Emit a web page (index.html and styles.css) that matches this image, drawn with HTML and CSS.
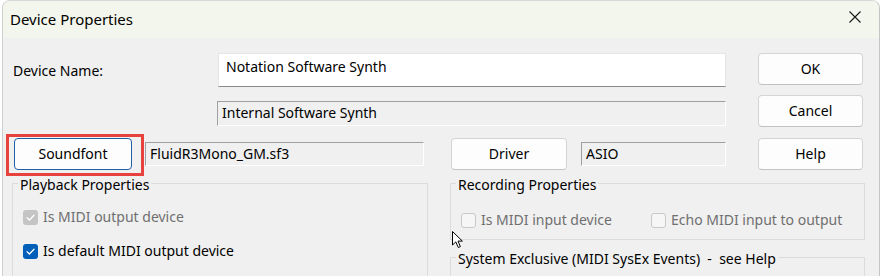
FILE: index.html
```html
<!DOCTYPE html>
<html>
<head>
<meta charset="utf-8">
<title>Device Properties</title>
<link rel="stylesheet" href="styles.css">
</head>
<body>
<div class="window">
  <div class="titlebar">
    <span class="title">Device Properties</span>
    <svg class="close" width="12" height="12" viewBox="0 0 12 12"><path d="M0.5 0.5 L11.5 11.5 M11.5 0.5 L0.5 11.5" stroke="#1a1a1a" stroke-width="1.1" fill="none"/></svg>
  </div>
  <div class="content">
    <div class="row r1">
      <div class="label">Device Name:</div>
      <div class="edit name">Notation Software Synth</div>
      <div class="btn ok">OK</div>
    </div>
    <div class="row r2">
      <div class="spacer"></div>
      <div class="field internal">Internal Software Synth</div>
      <div class="btn cancel">Cancel</div>
    </div>
    <div class="row r3">
      <div class="btn soundfont focus">Soundfont<span class="highlight"></span></div>
      <div class="field sf">FluidR3Mono_GM.sf3</div>
      <div class="btn driver">Driver</div>
      <div class="field asio">ASIO</div>
      <div class="btn help">Help</div>
    </div>
    <div class="groups">
      <fieldset class="group playback">
        <legend>Playback Properties</legend>
        <div class="check disabled"><span class="box checked-dis"><svg width="15" height="15" viewBox="0 0 15 15"><path d="M4 7.6 L6.4 10 L11 5.2" stroke="#fff" stroke-width="1.3" fill="none" stroke-linecap="round" stroke-linejoin="round"/></svg></span>Is MIDI output device</div>
        <div class="check second"><span class="box checked"><svg width="15" height="15" viewBox="0 0 15 15"><path d="M4 7.6 L6.4 10 L11 5.2" stroke="#fff" stroke-width="1.3" fill="none" stroke-linecap="round" stroke-linejoin="round"/></svg></span>Is default MIDI output device</div>
      </fieldset>
      <div class="rightcol">
        <fieldset class="group recording">
          <legend>Recording Properties</legend>
          <div class="checkrow">
            <div class="check disabled input"><span class="box empty"></span>Is MIDI input device</div>
            <div class="check disabled"><span class="box empty"></span>Echo MIDI input to output</div>
          </div>
        </fieldset>
        <fieldset class="group sysex">
          <legend>System Exclusive (MIDI SysEx Events)&nbsp; -&nbsp; see Help</legend>
        </fieldset>
      </div>
    </div>
    <svg class="cursor" width="12" height="18" viewBox="0 0 12 18"><path d="M0.5 0.5 L0.5 14 L3.8 10.9 L6.3 16.5 L8.4 15.6 L6 10.1 L10.4 10.1 Z" fill="#fff" stroke="#000" stroke-width="1" stroke-linejoin="miter"/></svg>
  </div>
</div>
</body>
</html>
```

FILE: styles.css
```css
html, body {
  margin: 0;
  padding: 0;
  background: #ffffff;
  width: 886px;
  height: 276px;
  overflow: hidden;
  font-family: "Noto Sans", "Liberation Sans", sans-serif;
  font-size: 14px;
  color: #000;
}

.window {
  margin-left: 2px;
  width: 878px;
  height: 276px;
  border-left: 1px solid #cfcfcf;
  border-right: 1px solid #c4c4c4;
  border-top: 1px solid #d8d8d8;
  border-top-right-radius: 8px;
  border-top-left-radius: 8px;
  background: #f0f0f0;
  overflow: hidden;
  box-sizing: border-box;
}

.titlebar {
  height: 37px;
  background: #f3f6ec;
  display: flex;
  align-items: center;
  justify-content: space-between;
  padding: 0 0 0 7px;
}

.title {
  font-size: 15px;
  margin-top: -2px;
}

.close {
  margin-right: 18px;
  margin-top: -6px;
}

.content {
  position: relative;
  height: 238px;
}

.row {
  display: flex;
  align-items: flex-start;
}

.r1 {
  padding-top: 15px;
  height: 34px;
}

.label {
  width: 205px;
  padding-left: 10px;
  line-height: 20px;
  margin-top: 8px;
}

.edit {
  width: 508px;
  height: 34px;
  box-sizing: border-box;
  background: #fff;
  border: 1px solid #e6e6e6;
  border-bottom: 1px solid #8a8a8a;
  padding: 3px 0 0 7px;
  line-height: 20px;
}

.btn {
  box-sizing: border-box;
  height: 32px;
  background: #fdfdfd;
  border: 1px solid #d4d4d4;
  border-bottom-color: #c2c2c2;
  border-radius: 4px;
  display: flex;
  align-items: center;
  justify-content: center;
  line-height: 20px;
}

.ok, .cancel, .help {
  width: 105px;
  margin-left: 32px;
}

.r2 {
  margin-top: 8px;
  height: 32px;
}

.spacer {
  width: 214px;
}

.field {
  box-sizing: border-box;
  height: 25px;
  border-top: 1px solid #a0a0a0;
  border-left: 1px solid #a0a0a0;
  border-right: 1px solid #ffffff;
  border-bottom: 1px solid #ffffff;
  background: #f0f0f0;
  padding-left: 4px;
  line-height: 22px;
}

.internal {
  width: 509px;
  margin-top: 6px;
}

.r3 {
  margin-top: 11px;
  height: 32px;
  padding-left: 11px;
}

.soundfont {
  width: 118px;
  position: relative;
}

.focus {
  border: 1px solid #1f5fa8;
}

.highlight {
  position: absolute;
  left: -9px;
  top: -5px;
  width: 138px;
  height: 42px;
  border: 3px solid #e8423f;
  box-sizing: border-box;
}

.sf {
  width: 279px;
  margin-left: 13px;
  margin-top: 4px;
  height: 24px;
}

.driver {
  width: 116px;
  margin-left: 27px;
}

.asio {
  width: 145px;
  margin-left: 14px;
  margin-top: 4px;
  height: 24px;
}

.groups {
  display: flex;
  padding-left: 9px;
  margin-top: 1px;
  gap: 22px;
}

fieldset.group {
  margin: 0;
  padding: 0 10px;
  border: 1px solid #dcdcdc;
  box-sizing: border-box;
  min-width: 0;
}

fieldset.group legend {
  padding: 4px 2px 0 2px;
  margin-left: -5px;
  line-height: 20px;
}

.playback {
  width: 416px;
  height: 200px;
}

.rightcol {
  display: flex;
  flex-direction: column;
  width: 415px;
}

.recording {
  height: 69px;
}

.sysex {
  margin-top: 5px !important;
  height: 80px;
}

.check {
  display: flex;
  align-items: center;
  gap: 5px;
  height: 20px;
  line-height: 20px;
}

.playback .check:first-of-type {
  margin-top: 12px;
}

.check.second {
  margin-top: 14px;
}

.disabled {
  color: #6f6f6f;
}

.box {
  width: 15px;
  height: 15px;
  box-sizing: border-box;
  border-radius: 3px;
  flex: none;
  display: block;
}

.box svg {
  display: block;
}

.checked-dis {
  background: #c4c4c4;
}

.checked {
  background: #005fb8;
}

.empty {
  border: 1px solid #c9c9c9;
  background: #f6f6f6;
}

.checkrow {
  display: flex;
  margin-top: 15px;
}

.check.input {
  width: 190px;
}

.cursor {
  position: absolute;
  left: 449px;
  top: 193px;
}
```
